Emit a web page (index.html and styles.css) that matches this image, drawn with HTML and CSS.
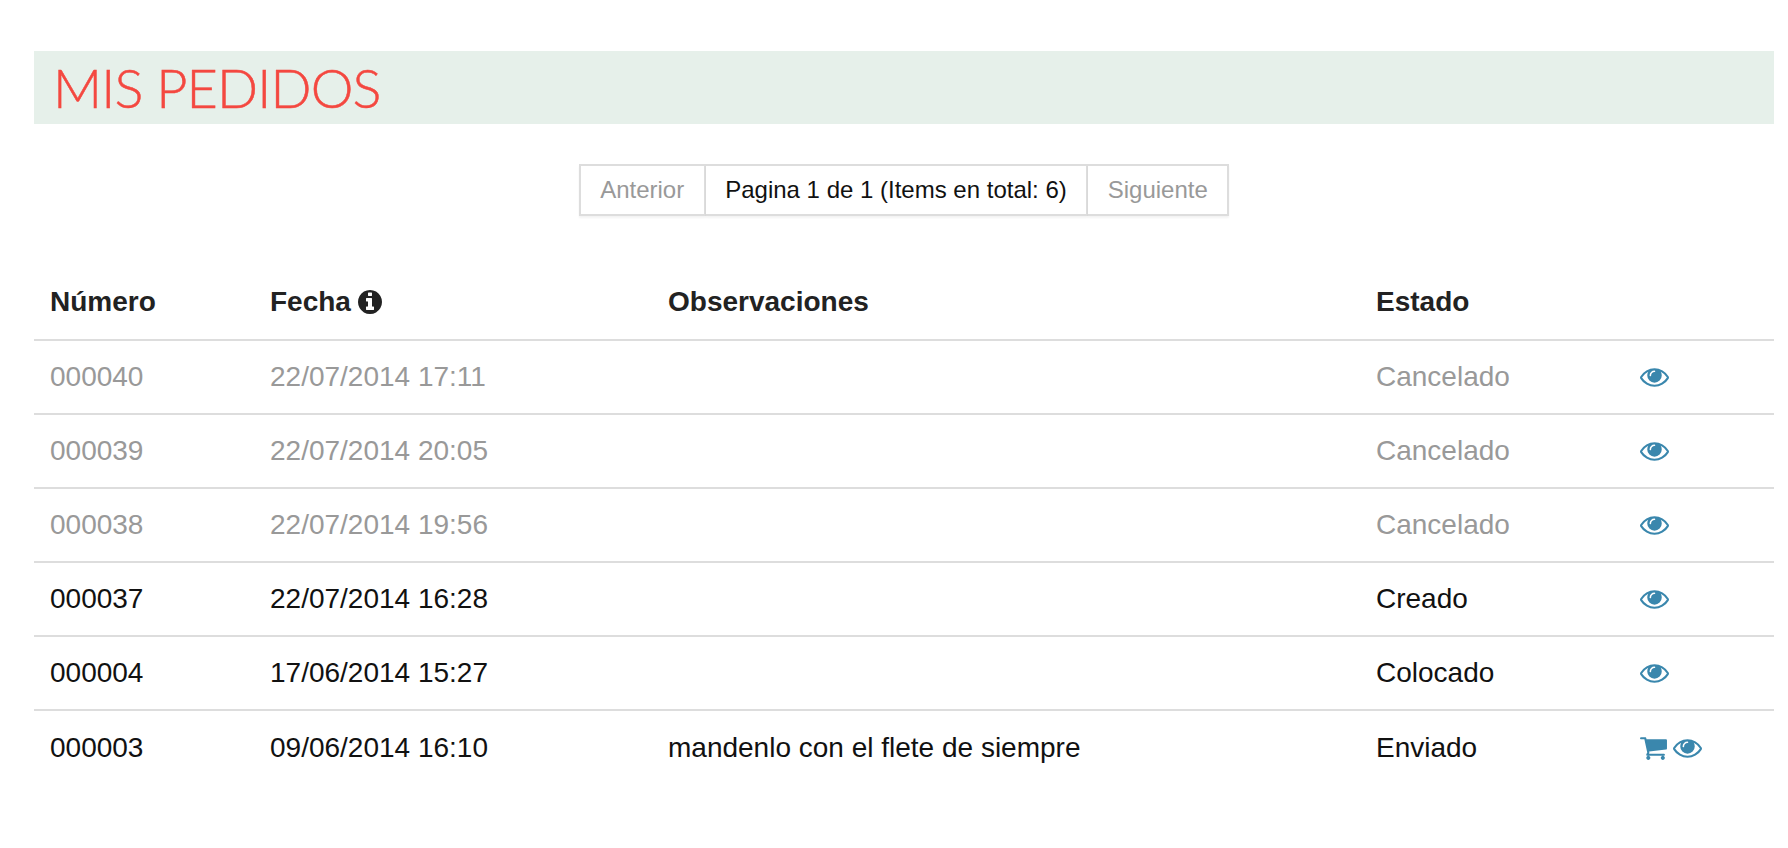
FILE: index.html
```html
<!DOCTYPE html>
<html lang="es">
<head>
<meta charset="utf-8">
<title>Mis pedidos</title>
<link rel="stylesheet" href="styles.css">
</head>
<body>
<svg class="defs" width="0" height="0" aria-hidden="true">
  <symbol id="eye" viewBox="0 0 1792 1792"><path d="M1664 960q-152-236-381-353 61 104 61 225 0 185-131.500 316.500t-316.500 131.500-316.500-131.500-131.500-316.500q0-121 61-225-229 117-381 353 133 205 333.500 326.500t434.500 121.500 434.500-121.500 333.500-326.500zm-720-384q0-20-14-34t-34-14q-125 0-214.500 89.500t-89.500 214.500q0 20 14 34t34 14 34-14 14-34q0-86 61-147t147-61q20 0 34-14t14-34zm848 384q0 34-20 69-140 230-376.500 368.500t-499.500 138.500-499.500-139-376.500-368q-20-35-20-69t20-69q140-229 376.500-368t499.500-139 499.500 139 376.500 368q20 35 20 69z"/></symbol>
  <symbol id="cart" viewBox="0 0 1792 1792"><path d="M704 1536q0 52-38 90t-90 38-90-38-38-90 38-90 90-38 90 38 38 90zm896 0q0 52-38 90t-90 38-90-38-38-90 38-90 90-38 90 38 38 90zm128-1088v512q0 24-16.500 42.500t-40.500 21.500l-1044 122q13 60 13 70 0 16-24 64h920q26 0 45 19t19 45-19 45-45 19h-1024q-26 0-45-19t-19-45q0-11 8-31.500t16-36 21.500-40 15.500-29.500l-177-823h-204q-26 0-45-19t-19-45 19-45 45-19h256q16 0 28.500 6.500t19.500 15.500 13 24.500 8 26 5.500 29.500 4.500 26h1201q26 0 45 19t19 45z"/></symbol>
  <symbol id="info" viewBox="0 0 1792 1792"><path d="M1152 1376v-160q0-14-9-23t-23-9h-96v-512q0-14-9-23t-23-9h-320q-14 0-23 9t-9 23v160q0 14 9 23t23 9h96v320h-96q-14 0-23 9t-9 23v160q0 14 9 23t23 9h448q14 0 23-9t9-23zm-128-896v-160q0-14-9-23t-23-9h-192q-14 0-23 9t-9 23v160q0 14 9 23t23 9h192q14 0 23-9t9-23zm640 416q0 209-103 385.500t-279.500 279.500-385.500 103-385.500-103-279.500-279.500-103-385.500 103-385.500 279.500-279.500 385.500-103 385.500 103 279.500 279.500 103 385.500z"/></symbol>
</svg>
<main class="page">
  <h1 class="title">MIS PEDIDOS</h1>
  <nav class="pager">
    <a class="pager-item muted">Anterior</a>
    <span class="pager-item">Pagina 1 de 1 (Items en total: 6)</span>
    <a class="pager-item muted">Siguiente</a>
  </nav>
  <table class="orders">
    <colgroup>
      <col class="c-num"><col class="c-date"><col class="c-obs"><col class="c-state"><col class="c-act">
    </colgroup>
    <thead>
      <tr>
        <th>Número</th>
        <th>Fecha <svg class="icon icon-info"><use href="#info"/></svg></th>
        <th>Observaciones</th>
        <th>Estado</th>
        <th></th>
      </tr>
    </thead>
    <tbody>
      <tr class="cancelled"><td>000040</td><td>22/07/2014 17:11</td><td></td><td>Cancelado</td><td><a class="act"><svg class="icon"><use href="#eye"/></svg></a></td></tr>
      <tr class="cancelled"><td>000039</td><td>22/07/2014 20:05</td><td></td><td>Cancelado</td><td><a class="act"><svg class="icon"><use href="#eye"/></svg></a></td></tr>
      <tr class="cancelled"><td>000038</td><td>22/07/2014 19:56</td><td></td><td>Cancelado</td><td><a class="act"><svg class="icon"><use href="#eye"/></svg></a></td></tr>
      <tr><td>000037</td><td>22/07/2014 16:28</td><td></td><td>Creado</td><td><a class="act"><svg class="icon"><use href="#eye"/></svg></a></td></tr>
      <tr><td>000004</td><td>17/06/2014 15:27</td><td></td><td>Colocado</td><td><a class="act"><svg class="icon"><use href="#eye"/></svg></a></td></tr>
      <tr><td>000003</td><td>09/06/2014 16:10</td><td>mandenlo con el flete de siempre</td><td>Enviado</td><td><a class="act act-multi"><svg class="icon"><use href="#cart"/></svg><svg class="icon"><use href="#eye"/></svg></a></td></tr>
    </tbody>
  </table>
</main>
</body>
</html>
```
FILE: styles.css
```css
* { box-sizing: border-box; }
html, body { margin: 0; background: #fff; }
body { font-family: "Liberation Sans", Arial, sans-serif; color: #111; }
.defs { position: absolute; }
.page { padding: 51px 14px 0 34px; }
.title {
  margin: 0;
  height: 73px;
  padding-left: 19px;
  background: #e6f0ea;
  color: #f44840;
  font-family: Lato, "Open Sans", sans-serif;
  font-weight: 300;
  font-size: 54px;
  letter-spacing: -0.85px;
  line-height: 73px;
  -webkit-text-stroke: 0.5px #f44840;
}
.pager {
  display: flex;
  justify-content: center;
  margin-top: 40px;
  font-size: 24px;
}
.pager-item {
  height: 52px;
  padding: 0 19.5px;
  border: 2px solid #ddd;
  border-left-width: 0;
  line-height: 48px;
  background: #fff;
  box-shadow: 0 2px 2px rgba(0,0,0,.05);
}
.pager-item:first-child { border-left-width: 2px; }
.muted { color: #999; }
.orders {
  width: 100%;
  margin-top: 49px;
  border-collapse: collapse;
  table-layout: fixed;
  font-size: 28px;
}
.c-num { width: 220px; }
.c-date { width: 398px; }
.c-obs { width: 708px; }
.c-state { width: 264px; }
th, td { padding: 0 16px; text-align: left; height: 74px; }
th { color: #222; font-weight: 700; height: 75px; border-bottom: 2px solid #ddd; }
tbody tr + tr td { border-top: 2px solid #ddd; }
.cancelled { color: #999; }
.icon { width: 29px; height: 29px; fill: currentColor; }
.icon-info { width: 28px; height: 28px; margin-left: -3px; vertical-align: -5px; }
.act { display: inline-flex; gap: 5px; color: #3a87ad; vertical-align: -5px; }
.act-multi { margin-left: -1px; }
```
